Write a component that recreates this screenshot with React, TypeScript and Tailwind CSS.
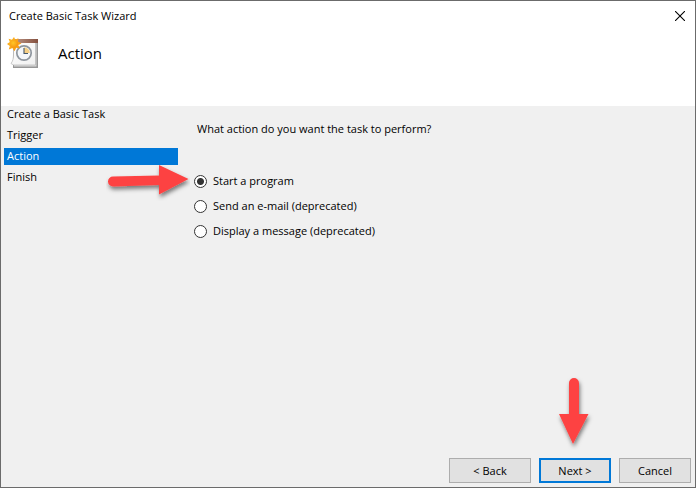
const steps = ['Create a Basic Task', 'Trigger', 'Action', 'Finish'];

const actions = [
  { id: 'program', label: 'Start a program' },
  { id: 'email', label: 'Send an e-mail (deprecated)' },
  { id: 'message', label: 'Display a message (deprecated)' },
];

function TaskIcon() {
  return (
    <svg className="w-8 h-8 shrink-0" viewBox="0 0 32 32" aria-hidden="true">
      <defs>
        <linearGradient id="page" x1="0" y1="0" x2="1" y2="1">
          <stop offset="0" stopColor="#ffffff" />
          <stop offset="1" stopColor="#f0f0f0" />
        </linearGradient>
        <linearGradient id="bar" x1="0" y1="0" x2="1" y2="0">
          <stop offset="0" stopColor="#c09a8a" />
          <stop offset="1" stopColor="#84503f" />
        </linearGradient>
        <radialGradient id="sun" cx="0.4" cy="0.4" r="0.6">
          <stop offset="0" stopColor="#ffc727" />
          <stop offset="1" stopColor="#f79410" />
        </radialGradient>
      </defs>
      {/* Calendar pad */}
      <path d="M6 4h25v27H6z" fill="#979797" />
      <path d="M7 4h22.500v25.500H7z" fill="#dadada" />
      <path d="M6.500 4h22v24H6.500L4 26.500C6 24 6.500 21 6.500 17z" fill="url(#page)" stroke="#b5b5b5" strokeWidth="0.7" />
      <path d="M6 2h25v4H6z" fill="url(#bar)" />
      {/* Clock */}
      <circle cx="17" cy="16" r="7.200" fill="#f4f7fb" stroke="#8f969e" strokeWidth="1.700" />
      <path d="M17 16V10.200a5.800 5.800 0 0 1 5.800 5.800z" fill="#f5cf86" />
      <path d="M17 11V16.500h4" fill="none" stroke="#44586c" strokeWidth="1.100" />
      {/* Star burst */}
      <path
        d="M7 0L8.300 2.700 11.400 1.200 10.800 4.400 14.500 6.500 11.300 8 12.800 11.600 9.300 10.800 7.400 14.200 5.400 11 1.800 12.400 2.800 9 0 7 2.800 5 1.600 1.800 5 2.700z"
        fill="url(#sun)"
      />
      <circle cx="7" cy="6.800" r="4.200" fill="url(#sun)" />
    </svg>
  );
}

function ArrowRight() {
  return (
    <svg
      className="absolute right-full top-1/2 -translate-y-1/2 mr-1 w-[84px] h-10 pointer-events-none"
      viewBox="0 0 84 40"
      aria-hidden="true"
    >
      <defs>
        <filter id="shadow-right" x="-20%" y="-20%" width="140%" height="160%">
          <feDropShadow dx="1" dy="3" stdDeviation="2" floodColor="#000" floodOpacity="0.5" />
        </filter>
      </defs>
      <path
        d="M7 15.500L53 14.500V4L82.500 18 53 33.500V24L7 25.500a5 5 0 0 1 0-10z"
        fill="#fd4343"
        filter="url(#shadow-right)"
      />
    </svg>
  );
}

function ArrowDown() {
  return (
    <svg
      className="absolute bottom-full left-1/2 -translate-x-1/2 mb-2 w-10 h-[76px] pointer-events-none"
      viewBox="0 0 40 76"
      aria-hidden="true"
    >
      <defs>
        <filter id="shadow-down" x="-30%" y="-10%" width="170%" height="130%">
          <feDropShadow dx="1" dy="3" stdDeviation="2" floodColor="#000" floodOpacity="0.5" />
        </filter>
      </defs>
      <path
        d="M14 9a5 5 0 0 1 10 0V40H33.500L18 70 4 40h10z"
        fill="#fd4343"
        filter="url(#shadow-down)"
      />
    </svg>
  );
}

export default function App() {
  return (
    <div className="min-h-screen flex flex-col bg-[#f0f0f0] border border-[#6b6b6b] text-black text-[11px] leading-4 font-['Open_Sans','Noto_Sans',sans-serif]">
      {/* Title bar and page heading */}
      <header className="bg-white pb-8">
        <div className="flex items-center justify-between h-[30px] pl-2 pr-[10px]">
          <span>Create Basic Task Wizard</span>
          <button type="button" aria-label="Close">
            <svg className="w-[10px] h-[10px]" viewBox="0 0 10 10" aria-hidden="true">
              <path d="M0 0l10 10M10 0l-10 10" stroke="#000" strokeWidth="1.1" />
            </svg>
          </button>
        </div>
        <div className="flex items-center h-[43px] pl-[6px] gap-[19px]">
          <TaskIcon />
          <h1 className="text-[15px] leading-5">Action</h1>
        </div>
      </header>

      <main className="flex-1 flex">
        <nav className="w-[177px] shrink-0 pl-[3px]">
          <ul className="flex flex-col gap-1">
            {steps.map((step) => (
              <li
                key={step}
                aria-current={step === 'Action' ? 'step' : undefined}
                className={`h-[17px] pl-[3px] ${step === 'Action' ? 'bg-[#0078d7] text-white' : ''}`}
              >
                {step}
              </li>
            ))}
          </ul>
        </nav>

        <div role="radiogroup" aria-labelledby="question" className="flex-1 pl-4 pt-[15px]">
          <p id="question" className="pl-[3px]">What action do you want the task to perform?</p>
          <div className="flex flex-col items-start gap-[9px] mt-9">
            {actions.map(({ id, label }) => (
              <label key={id} htmlFor={id} className="relative flex items-center gap-[6px]">
                {id === 'program' && <ArrowRight />}
                <input
                  id={id}
                  type="radio"
                  name="action"
                  defaultChecked={id === 'program'}
                  className="appearance-none w-[13px] h-[13px] rounded-full border border-[#333] bg-white checked:bg-[radial-gradient(circle,#333_3px,#fff_4px)]"
                />
                {label}
              </label>
            ))}
          </div>
        </div>
      </main>

      <footer className="flex justify-end gap-2 p-1">
        <button type="button" className="w-[82px] h-[25px] bg-[#e1e1e1] border border-[#adadad]">
          &lt; Back
        </button>
        <div className="relative flex">
          <ArrowDown />
          <button type="button" className="w-[72px] h-[25px] bg-[#e1e1e1] border-2 border-[#0078d7]">
            Next &gt;
          </button>
        </div>
        <button type="button" className="w-[72px] h-[25px] bg-[#e1e1e1] border border-[#adadad]">
          Cancel
        </button>
      </footer>
    </div>
  );
}
